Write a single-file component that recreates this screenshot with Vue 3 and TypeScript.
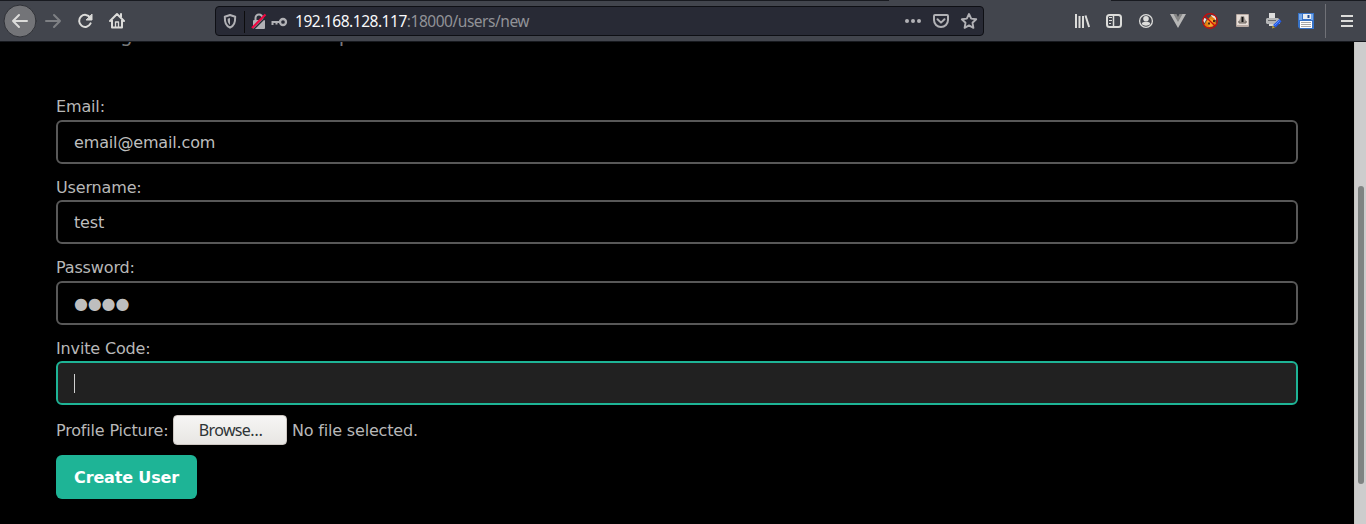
<script setup lang="ts">
interface Field {
  label: string
  value: string
  kind: 'text' | 'password' | 'focus'
}

const fields: Field[] = [
  { label: 'Email:', value: 'email@email.com', kind: 'text' },
  { label: 'Username:', value: 'test', kind: 'text' },
  { label: 'Password:', value: '●●●●', kind: 'password' },
  { label: 'Invite Code:', value: '', kind: 'focus' },
]
</script>

<template>
  <div class="window">
    <header class="toolbar">
      <svg class="nav" width="140" height="41" fill="none" stroke="#dcdcda" stroke-width="2" stroke-linecap="round" stroke-linejoin="round">
        <circle cx="20" cy="21" r="16" fill="#737478" stroke="#2f3137" stroke-width="1" />
        <path d="M27 21H13M19 15l-6 6 6 6" />
        <path d="M46 21h14M54 15l6 6-6 6" stroke="#7e8084" />
        <path d="M90.2 17.6A6 6 0 1 0 90.6 23.4" />
        <path d="M92 14.500v5.500h-5.500z" fill="#dcdcda" stroke-width="1" />
        <path d="M110 21l7-7 7 7M112 20v7.400h10V20M121 14v3" />
        <path d="M115.500 27v-5h3v5" stroke-width="1.300" />
      </svg>

      <div class="urlbar">
        <svg class="identity" width="78" height="28" fill="none" stroke="#b1b1b5" stroke-width="2">
          <path d="M8.800 9.700L14 8l5.200 1.700c0 6-1 8.800-5.200 11-4.200-2.200-5.200-5-5.200-11z" stroke-linejoin="round" />
          <path d="M14 11v7c-1.800-1.400-2.400-3.500-2.400-6.300z" fill="#b1b1b5" stroke="none" />
          <path d="M28.500 4v22" stroke="#0c0c0d" stroke-width="1" />
          <path d="M39.500 14v-3a3.500 3.500 0 0 1 7 0v3" />
          <rect x="37" y="13" width="12" height="9" rx="1" fill="#b1b1b5" stroke="none" />
          <path d="M37.500 22.500L50.500 9.500" stroke="#282a35" stroke-width="1.500" />
          <path d="M36 21L49.500 7.500" stroke="#f00640" stroke-width="2.200" />
          <circle cx="67" cy="15" r="3" stroke-width="2.300" />
          <path d="M64 15h-8.500M56.500 15v3M60.500 15v2.500" />
        </svg>
        <div class="url"><span class="host">192.168.128.117</span>:18000/users/new</div>
        <svg class="page-actions" width="84" height="28" fill="none" stroke="#b1b1b5" stroke-width="2" stroke-linejoin="round" stroke-linecap="round">
          <g fill="#b1b1b5" stroke="none">
            <circle cx="7" cy="15" r="2" /><circle cx="13" cy="15" r="2" /><circle cx="19" cy="15" r="2" />
          </g>
          <path d="M35 9h12a1 1 0 0 1 1 1v4a7 7 0 0 1-14 0v-4a1 1 0 0 1 1-1z" />
          <path d="M37.500 13.200l3.500 3.400 3.500-3.400" />
          <path d="M69 8l2.200 4.600 5 .7-3.700 3.500.9 5-4.400-2.400-4.400 2.400.9-5-3.700-3.500 5-.7z" stroke-width="1.900" />
        </svg>
      </div>

      <svg class="tools" width="306" height="41" fill="none" stroke="#dcdcda" stroke-width="2">
        <path d="M16 14v14M19.500 16v12M23 16v12M25.500 15.500l3.600 11.500" />
        <rect x="47" y="15" width="14" height="12" rx="2.500" />
        <path d="M53.500 15v12" stroke-width="1.500" />
        <path d="M49 17.500h3M49 20.500h3M49 23.500h2" stroke-width="1" />
        <circle cx="86" cy="21" r="6.400" stroke-width="1.300" />
        <circle cx="86" cy="18.700" r="2.800" fill="#dcdcda" stroke="none" />
        <path d="M81.800 24c0-1.700 1.500-2 4.200-2s4.200.3 4.200 2c-2 2.300-6.400 2.300-8.400 0z" fill="#dcdcda" stroke="none" />

        <g stroke="none">
          <path d="M110 14h4l4 7 4-7h4l-8 14z" fill="#b7b7b7" />
          <path d="M113.500 14h3l1.500 3 1.500-3h3L118 22z" fill="#858585" />
        </g>

        <g stroke="none">
          <path d="M142.500 20l2-2 2 1-2 4zM151 15l5 1v4l-4-1z" fill="#ebe4d9" />
          <path d="M144 25l3-5 4-4 4 3 1 5-4 3-6 .5z" fill="#e28112" />
          <path d="M147 21l4-2 3 2-2 2 2 2-5 2z" fill="#f9a52e" />
          <path d="M148 22.500h2v2h-2zM153 20h2v2h-2z" fill="#4b2910" />
          <circle cx="150" cy="21" r="7.300" stroke="#cf0808" stroke-width="1.200" />
          <path d="M145 16l10 10" stroke="#cf0808" stroke-width="1.200" />
        </g>

        <g stroke="none">
          <rect x="176" y="14" width="13" height="13" rx="1" fill="#b8aaa3" />
          <rect x="177" y="15" width="11" height="10" fill="#e6ddd7" />
          <path d="M181 16h3l1 3 2 3-2 1h-5l-2-1 2-3z" fill="#a39b95" />
          <path d="M181.500 17h2v5h-2z" fill="#151414" />
          <path d="M179 21v2h7v-2" fill="none" stroke="#6b625d" stroke-width="1" />
        </g>

        <g stroke="none">
          <path d="M209 13h6v6h-6z" fill="#dedede" />
          <path d="M206 19l1-1h11l2 2v4h-13l-1-1z" fill="#b5b6b7" />
          <path d="M208 20h8v1h-8z" fill="#65676a" />
          <path d="M209 24h6v2h-6z" fill="#d5d5d5" />
          <path d="M219.500 19l2 2.500-6 6-2.500-2.500z" fill="#245be3" />
          <path d="M219.500 20.500l-5 5" stroke="#5c92ff" stroke-width="1" />
          <path d="M212.500 25.500l2.500 2-3 1z" fill="#b6a23b" />
        </g>

        <g stroke="none">
          <path d="M238 13h16v16h-14l-2-2z" fill="#3672c7" />
          <path d="M239 14h3v6h-3zM251 14h2v6h-2z" fill="#75a7e9" />
          <path d="M243 14h8v5h-8z" fill="#e8edf3" />
          <path d="M247.500 15h2v3h-2z" fill="#244c91" />
          <path d="M240 21h12v7h-12z" fill="#fff" />
          <path d="M241 22.500h10M241 24.500h10M241 26.500h10" stroke="#a7a7a7" stroke-width="1" />
        </g>

        <path d="M265.500 4v34" stroke="#707177" stroke-width="1" />
        <path d="M281 16h12M281 21h12M281 26h12" />
      </svg>
      <i class="tab-edge"></i>
    </header>

    <main class="page">
      <div class="intro"><span>g</span><span>p</span></div>
      <form class="form" @submit.prevent>
        <div v-for="field in fields" :key="field.label" class="group">
          <label class="label">{{ field.label }}</label>
          <div class="field" :class="field.kind">
            <i v-if="field.kind === 'focus'" class="caret"></i>
            <span v-else>{{ field.value }}</span>
          </div>
        </div>
        <div class="upload">
          <span class="caption">Profile Picture:</span>
          <button type="button" class="browse">Browse…</button>
          <span>No file selected.</span>
        </div>
        <button type="submit" class="create">Create User</button>
      </form>
      <div class="scrollbar"><div class="thumb"></div></div>
    </main>
  </div>
</template>

<style>
body { background: #000; overflow: hidden; }
</style>

<style scoped>
* { box-sizing: border-box; }
svg { display: block; flex: none; }
.window { width: 1366px; height: 524px; overflow: hidden; background: #000; }
.toolbar {
  position: relative; display: flex; height: 42px;
  background: #42454d; border-top: 1px solid #181a20; border-bottom: 1px solid #17191e;
}
.toolbar > svg { margin-top: -1px; }
.nav { margin-right: 75px; }
.urlbar {
  display: flex; width: 769px; height: 30px; margin: 5px 76px 0 0;
  background: #282a35; border: 1px solid #0e0f14; border-radius: 4px;
}
.page-actions { margin: -1px -1px 0 1px; }
.url {
  flex: 1; padding-left: 1px; font: 15.5px/29px "Noto Sans", sans-serif;
  letter-spacing: -0.47px; color: #919297; white-space: nowrap;
}
.host { color: #f9f9fa; }
.tab-edge { position: absolute; top: -1px; left: 889px; width: 222px; height: 1px; background: #42454d; }
.page { position: relative; display: flex; height: 482px; overflow: hidden; }
.intro {
  position: absolute; top: -19px; left: 120px; display: flex; gap: 206px;
  font: 20px/24px "DejaVu Sans", sans-serif; color: #77797a;
}
.form {
  width: 1298px; padding: 51px 0 0 56px;
  font: 16px/24px "DejaVu Sans", sans-serif; letter-spacing: -0.15px; color: #b8b8b8;
}
.group { height: 80.4px; }
.label { display: block; height: 27px; line-height: 27.8px; }
.group:nth-child(even) .label { line-height: 29.4px; }
.field {
  display: flex; align-items: center; height: 44px; padding: 2px 16px 0;
  border: 2px solid #585858; border-radius: 6px; color: #bebebe;
}
.focus { padding-top: 0; background: #212121; border-color: #1eb496; }
.caret { width: 1px; height: 19px; background: #d0d0d0; }
.upload { display: flex; align-items: center; height: 30px; gap: 5px; line-height: 28px; white-space: nowrap; }
.upload span { padding-top: 2px; letter-spacing: -0.18px; }
.caption { width: 112px; }
.browse {
  width: 114px; height: 30px; padding: 0 0 0 1px; border: 1px solid #cdc7c2; border-radius: 4px;
  background: linear-gradient(#f6f5f4, #e8e6e3); color: #2e3436;
  font: 16px/28px "Noto Sans", sans-serif; letter-spacing: -0.65px;
}
.create {
  display: block; width: 141px; height: 44px; margin-top: 10px; padding: 1px 0 0;
  border: 0; border-radius: 6px; background: #1eb496; color: #fff;
  font: bold 16px/44px "DejaVu Sans", sans-serif; letter-spacing: -0.16px;
}
.scrollbar { width: 12px; height: 482px; margin-left: auto; padding: 144px 0 0 3px; background: #cdcdcd; border-left: 1px solid #c5c5c0; }
.thumb { width: 6px; height: 298px; border-radius: 3px; background: #7f8382; }
</style>
